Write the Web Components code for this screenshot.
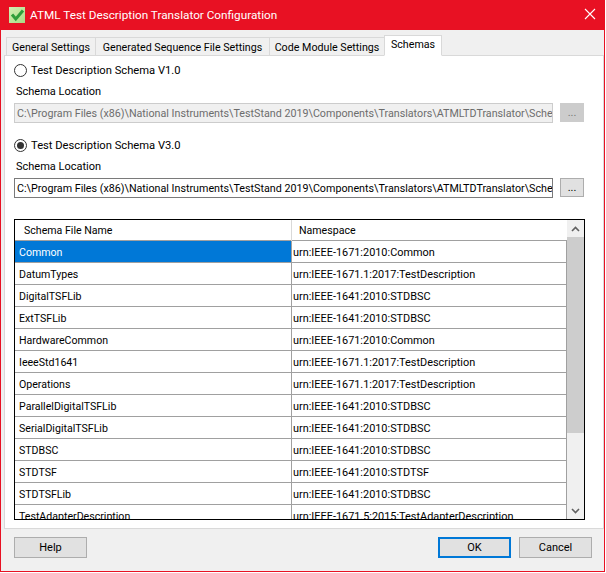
<!DOCTYPE html>
<html>
<head>
<meta charset="utf-8">
<title>ATML Test Description Translator Configuration</title>
<style>
  html, body { margin: 0; padding: 0; background: #fff; }
  body { font: 11px Roboto, "Liberation Sans", sans-serif; color: #000; }
</style>
</head>
<body>
<dialog-window caption="ATML Test Description Translator Configuration">
  <tab-strip slot="tabs" items="General Settings:90|Generated Sequence File Settings:174|Code Module Settings:115|Schemas:58" active="3"></tab-strip>
  <schema-option label="Test Description Schema V1.0" disabled></schema-option>
  <schema-option label="Test Description Schema V3.0" checked></schema-option>
  <schema-table></schema-table>
  <push-button slot="help">Help</push-button>
  <push-button slot="ok" default>OK</push-button>
  <push-button slot="cancel">Cancel</push-button>
</dialog-window>

<script>
const PATH = 'C:\\Program Files (x86)\\National Instruments\\TestStand 2019\\Components\\Translators\\ATMLTDTranslator\\Sche';

class DialogWindow extends HTMLElement {
  constructor() {
    super();
    this.attachShadow({ mode: 'open' });
  }

  connectedCallback() {
    this.shadowRoot.innerHTML = `
      <style>
        :host {
          display: flex;
          flex-direction: column;
          box-sizing: border-box;
          width: 605px;
          height: 572px;
          border: 1px solid #e81123;
          border-top: 0;
          background: #f0f0f0;
        }
        .title {
          display: flex;
          align-items: center;
          height: 30px;
          flex: none;
          background: #e81123;
          color: #fff;
          font-size: 11.75px;
          padding-left: 8px;
          gap: 5px;
        }
        .title span { flex: 1; }
        .tabs { padding: 5px 0 0 3px; flex: none; }
        .page {
          box-sizing: border-box;
          height: 474px;
          margin: -1px 0 0 3px;
          padding: 6px 10px 0 9px;
          background: #fff;
          border: 1px solid #d9d9d9;
          display: flex;
          flex-direction: column;
        }
        .foot {
          display: flex;
          padding: 8px 12px 0 13px;
          gap: 8px;
        }
        .foot .sp { flex: 1; }
        .close { display: block; margin-right: -1px; }
      </style>
      <div class="title">
        <svg width="16" height="16" viewBox="0 0 16 16">
          <defs><linearGradient id="g" x1="0" y1="0" x2="1" y2="1"><stop offset="0" stop-color="#d3efb4"/><stop offset="1" stop-color="#a8dc84"/></linearGradient></defs>
          <rect width="16" height="16" fill="url(#g)"/>
          <path d="M3 7.5 L6.8 12 L14 3.5" fill="none" stroke="#2f9e3a" stroke-width="3"/>
        </svg>
        <span>${this.getAttribute('caption')}</span>
        <svg class="close" width="30" height="30" viewBox="0 0 30 30"><path d="M10 9 L20 19 M20 9 L10 19" stroke="#fff" stroke-width="1.1" fill="none"/></svg>
      </div>
      <div class="tabs"><slot name="tabs"></slot></div>
      <div class="page"><slot></slot></div>
      <div class="foot">
        <slot name="help"></slot>
        <div class="sp"></div>
        <slot name="ok"></slot>
        <slot name="cancel"></slot>
      </div>
    `;
  }
}

class TabStrip extends HTMLElement {
  constructor() {
    super();
    this.attachShadow({ mode: 'open' });
  }

  connectedCallback() {
    const active = Number(this.getAttribute('active'));
    const tabs = this.getAttribute('items').split('|').map((item, i) => {
      const [name, w] = item.split(':');
      return `<div class="tab ${i === active ? 'on' : ''}" style="width:${w}px">${name}</div>`;
    }).join('');
    this.shadowRoot.innerHTML = `
      <style>
        :host { display: block; position: relative; z-index: 1; font-size: 10.7px; }
        .strip { display: flex; align-items: flex-end; padding-left: 2px; height: 21px; }
        .tab {
          box-sizing: border-box;
          height: 19px;
          line-height: 19px;
          text-align: center;
          background: #f0f0f0;
          border: 1px solid #d9d9d9;
          border-left-width: 0;
          white-space: nowrap;
        }
        .tab:first-child { border-left-width: 1px; }
        .tab.on {
          height: 21px;
          line-height: 18px;
          background: #fff;
          border-bottom-color: #fff;
          border-left-width: 1px;
          margin-left: -1px;
        }
      </style>
      <div class="strip">${tabs}</div>
    `;
  }
}

class SchemaOption extends HTMLElement {
  constructor() {
    super();
    this.attachShadow({ mode: 'open' });
  }

  connectedCallback() {
    const off = this.hasAttribute('disabled');
    const dot = this.hasAttribute('checked') ? '<circle cx="6.5" cy="6.5" r="3.5" fill="#333"/>' : '';
    this.shadowRoot.innerHTML = `
      <style>
        :host { display: block; height: 75px; flex: none; }
        .radio { display: flex; align-items: center; gap: 4px; height: 16px; font-size: 11.2px; }
        .lab { margin: 6px 0 0 2px; height: 16px; line-height: 16px; }
        .row { display: flex; gap: 7px; margin-top: 3px; }
        .field {
          box-sizing: border-box;
          width: 539px;
          height: 20px;
          line-height: 19px;
          padding: 0 2px;
          font-size: 10.72px;
          overflow: hidden;
          white-space: nowrap;
          border: 1px solid ${off ? '#ccc' : '#7a7a7a'};
          background: ${off ? '#f0f0f0' : '#fff'};
          color: ${off ? '#6d6d6d' : '#000'};
        }
        .more {
          box-sizing: border-box;
          width: 24px;
          height: 19px;
          line-height: 17px;
          text-align: center;
          background: ${off ? '#ccc' : '#e1e1e1'};
          border: 1px solid ${off ? '#ccc' : '#adadad'};
          color: ${off ? '#777' : '#000'};
        }
      </style>
      <div class="radio">
        <svg width="13" height="13" viewBox="0 0 13 13"><circle cx="6.5" cy="6.5" r="6" fill="#fff" stroke="#333"/>${dot}</svg>
        <span>${this.getAttribute('label')}</span>
      </div>
      <div class="lab">Schema Location</div>
      <div class="row">
        <div class="field">${PATH}</div>
        <div class="more">...</div>
      </div>
    `;
  }
}

class SchemaTable extends HTMLElement {
  constructor() {
    super();
    this.attachShadow({ mode: 'open' });
  }

  connectedCallback() {
    const rows = [
      ['Common', 'urn:IEEE-1671:2010:Common'],
      ['DatumTypes', 'urn:IEEE-1671.1:2017:TestDescription'],
      ['DigitalTSFLib', 'urn:IEEE-1641:2010:STDBSC'],
      ['ExtTSFLib', 'urn:IEEE-1641:2010:STDBSC'],
      ['HardwareCommon', 'urn:IEEE-1671:2010:Common'],
      ['IeeeStd1641', 'urn:IEEE-1671.1:2017:TestDescription'],
      ['Operations', 'urn:IEEE-1671.1:2017:TestDescription'],
      ['ParallelDigitalTSFLib', 'urn:IEEE-1641:2010:STDBSC'],
      ['SerialDigitalTSFLib', 'urn:IEEE-1641:2010:STDBSC'],
      ['STDBSC', 'urn:IEEE-1641:2010:STDBSC'],
      ['STDTSF', 'urn:IEEE-1641:2010:STDTSF'],
      ['STDTSFLib', 'urn:IEEE-1641:2010:STDBSC'],
      ['TestAdapterDescription', 'urn:IEEE-1671.5:2015:TestAdapterDescription'],
    ];
    const body = rows.map((r, i) =>
      `<div class="row ${i === 0 ? 'sel' : ''}"><div class="a">${r[0]}</div><div class="b">${r[1]}</div></div>`).join('');
    this.shadowRoot.innerHTML = `
      <style>
        :host {
          display: flex;
          box-sizing: border-box;
          width: 571px;
          height: 301px;
          margin-top: 7px;
          border: 1px solid #000;
          overflow: hidden;
          flex: none;
          font-size: 10.6px;
        }
        .list { width: 552px; flex: none; overflow: hidden; }
        .head, .row { display: grid; grid-template-columns: 277px 1fr; }
        .head { height: 21px; line-height: 21px; border-bottom: 1px solid #a0a0a0; box-sizing: border-box; }
        .head div { padding-left: 9px; border-right: 1px solid #d9d9d9; }
        .head div:last-child { border-right: 0; padding-left: 7px; }
        .row { height: 22px; line-height: 23px; box-sizing: border-box; border-bottom: 1px solid #a0a0a0; }
        .a, .b { white-space: nowrap; overflow: hidden; }
        .a { border-right: 1px solid #a0a0a0; padding-left: 4px; }
        .b { padding-left: 1px; border-right: 1px solid #a0a0a0; font-size: 10.9px; }
        .sel .a { background: #0078d7; color: #fff; }
        .bar {
          flex: none;
          width: 17px;
          background: #f0f0f0;
          display: flex;
          flex-direction: column;
        }
        .arrow { height: 17px; display: flex; align-items: center; justify-content: center; flex: none; }
        .thumb { height: 196px; background: #cdcdcd; flex: none; }
        .gap { flex: 1; }
      </style>
      <div class="list">
        <div class="head"><div>Schema File Name</div><div>Namespace</div></div>
        ${body}
      </div>
      <div class="bar">
        <div class="arrow"><svg width="9" height="6" viewBox="0 0 9 6"><path d="M1 5 L4.5 1.5 L8 5" fill="none" stroke="#606060" stroke-width="1.6"/></svg></div>
        <div class="thumb"></div>
        <div class="gap"></div>
        <div class="arrow"><svg width="9" height="6" viewBox="0 0 9 6"><path d="M1 1 L4.5 4.5 L8 1" fill="none" stroke="#606060" stroke-width="1.6"/></svg></div>
      </div>
    `;
  }
}

class PushButton extends HTMLElement {
  constructor() {
    super();
    this.attachShadow({ mode: 'open' });
  }

  connectedCallback() {
    const isDefault = this.hasAttribute('default');
    this.shadowRoot.innerHTML = `
      <style>
        :host { display: block; width: 73px; }
        div {
          box-sizing: border-box;
          height: 21px;
          line-height: ${isDefault ? 17 : 19}px;
          text-align: center;
          background: #e1e1e1;
          border: ${isDefault ? '2px solid #0078d7' : '1px solid #adadad'};
        }
      </style>
      <div><slot></slot></div>
    `;
  }
}

customElements.define('dialog-window', DialogWindow);
customElements.define('tab-strip', TabStrip);
customElements.define('schema-option', SchemaOption);
customElements.define('schema-table', SchemaTable);
customElements.define('push-button', PushButton);
</script>
</body>
</html>
